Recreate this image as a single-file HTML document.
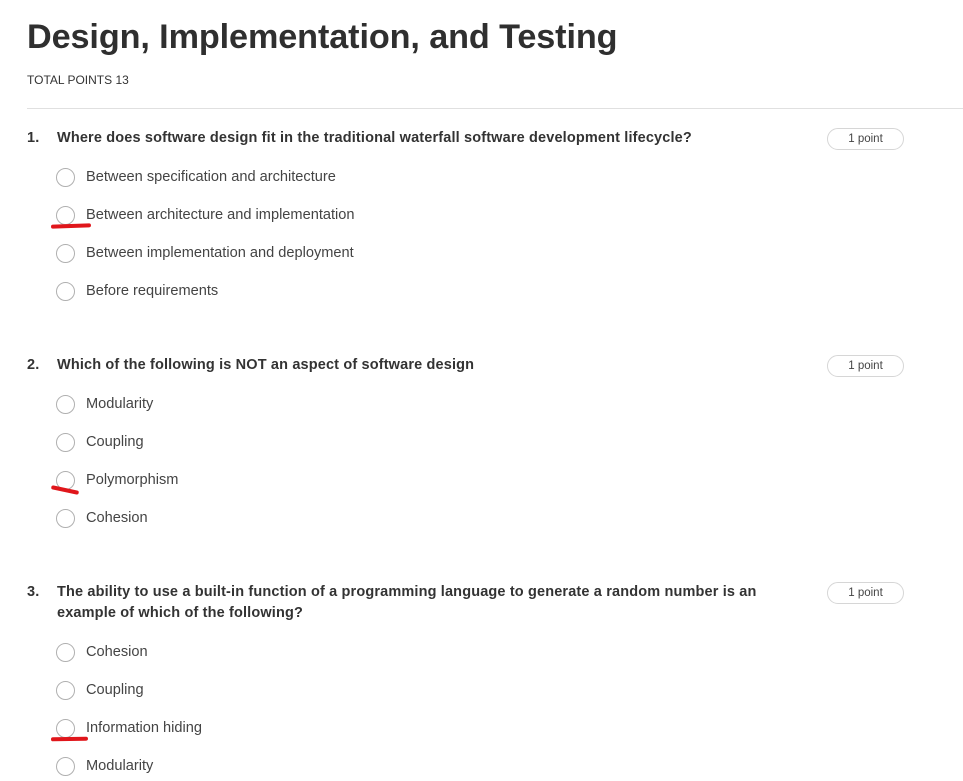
<!DOCTYPE html>
<html><head><meta charset="utf-8"><style>
body{margin:0;width:963px;height:781px;background:#fff;position:relative;overflow:hidden;font-family:"Liberation Sans",Arial,sans-serif;color:#333}
.a{position:absolute;white-space:nowrap}
h1{position:absolute;left:27px;top:18px;margin:0;font-size:34.2px;font-weight:bold;color:#2f2f2f;letter-spacing:-0.1px}
.tp{left:27px;top:73px;font-size:12px;color:#333}
.hr{position:absolute;left:27px;top:108px;width:936px;height:1px;background:#e0e0e0}
.q{font-size:14.5px;font-weight:bold;color:#333;line-height:21px;letter-spacing:0.15px}
.n{left:27px}
.qt{left:57px}
.o{font-size:14.6px;color:#444}
.r{position:absolute;left:56px;width:17px;height:17px;border:1.5px solid #b0b0b0;border-radius:50%}
.pt{position:absolute;left:827px;width:75px;height:20px;border:1px solid #d6d6d6;border-radius:11px;font-size:11.5px;color:#444;text-align:center;line-height:21px}
.m{position:absolute;height:4px;background:#e0161b;border-radius:2px}
</style></head><body>
<h1>Design, Implementation, and Testing</h1>
<div class="a tp">TOTAL POINTS 13</div>
<div class="hr"></div>

<div class="a q n" style="top:128px">1.</div>
<div class="a q qt" style="top:128px">Where does software design fit in the traditional waterfall software development lifecycle?</div>
<div class="pt" style="top:128px">1 point</div>
<div class="r" style="top:168px"></div><div class="a o" style="left:86px;top:169px">Between specification and architecture</div>
<div class="r" style="top:206px"></div><div class="a o" style="left:86px;top:207px">Between architecture and implementation</div>
<div class="r" style="top:244px"></div><div class="a o" style="left:86px;top:245px">Between implementation and deployment</div>
<div class="r" style="top:282px"></div><div class="a o" style="left:86px;top:283px">Before requirements</div>
<div class="m" style="left:51px;top:224px;width:40px;transform:rotate(-2deg)"></div>

<div class="a q n" style="top:355px">2.</div>
<div class="a q qt" style="top:355px">Which of the following is NOT an aspect of software design</div>
<div class="pt" style="top:355px">1 point</div>
<div class="r" style="top:395px"></div><div class="a o" style="left:86px;top:396px">Modularity</div>
<div class="r" style="top:433px"></div><div class="a o" style="left:86px;top:434px">Coupling</div>
<div class="r" style="top:471px"></div><div class="a o" style="left:86px;top:472px">Polymorphism</div>
<div class="r" style="top:509px"></div><div class="a o" style="left:86px;top:510px">Cohesion</div>
<div class="m" style="left:51px;top:488px;width:28px;transform:rotate(12deg)"></div>

<div class="a q n" style="top:582px">3.</div>
<div class="a q qt" style="top:582px">The ability to use a built-in function of a programming language to generate a random number is an<br>example of which of the following?</div>
<div class="pt" style="top:582px">1 point</div>
<div class="r" style="top:643px"></div><div class="a o" style="left:86px;top:644px">Cohesion</div>
<div class="r" style="top:681px"></div><div class="a o" style="left:86px;top:682px">Coupling</div>
<div class="r" style="top:719px"></div><div class="a o" style="left:86px;top:720px">Information hiding</div>
<div class="r" style="top:757px"></div><div class="a o" style="left:86px;top:758px">Modularity</div>
<div class="m" style="left:51px;top:737px;width:37px;transform:rotate(-1deg)"></div>
</body></html>
